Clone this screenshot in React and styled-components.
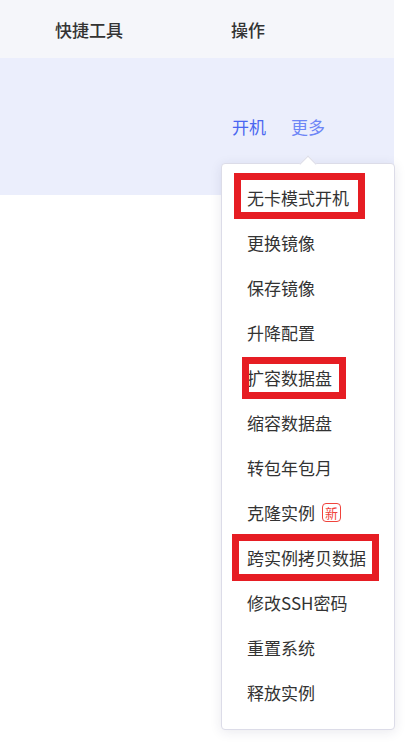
import React from 'react';
import styled, { createGlobalStyle } from 'styled-components';

const GlobalStyle = createGlobalStyle`
  html, body {
    margin: 0;
    padding: 0;
    background: #ffffff;
    font-family: "Noto Sans CJK SC", "Noto Sans", sans-serif;
  }
`;

const Page = styled.div`
  position: relative;
  width: 417px;
  height: 755px;
  overflow: hidden;
`;

const Table = styled.div`
  width: 394px;
`;

const HeadRow = styled.div`
  display: flex;
  align-items: center;
  height: 58px;
  background: #f5f6fa;
  color: #333333;
  font-size: 17px;
  font-weight: 500;
`;

const BodyRow = styled.div`
  display: flex;
  align-items: center;
  height: 137px;
  background: #ebeefc;
  font-size: 17px;
`;

const Cell = styled.div`
  width: ${(p) => p.$w}px;
  flex-shrink: 0;
  display: flex;
  gap: 25px;
`;

const Action = styled.span`
  color: ${(p) => (p.$primary ? '#4a66f0' : '#6d85f6')};
`;

const Menu = styled.div`
  position: absolute;
  left: 221px;
  top: 163px;
  width: 172px;
  padding: 11px 0 14px;
  background: #ffffff;
  border: 1px solid #dcdce8;
  border-radius: 4px;
  box-shadow: 0 2px 12px rgba(40, 40, 90, 0.1);

  &::before {
    content: '';
    position: absolute;
    top: -6px;
    left: 80px;
    width: 11px;
    height: 11px;
    background: #ffffff;
    border-left: 1px solid #dcdce8;
    border-top: 1px solid #dcdce8;
    transform: rotate(45deg);
  }
`;

const Item = styled.div`
  position: relative;
  display: flex;
  align-items: center;
  gap: 7px;
  height: 45px;
  padding-left: 25px;
  font-size: 17px;
  color: #333333;
`;

const Badge = styled.span`
  display: inline-flex;
  align-items: center;
  justify-content: center;
  width: 19px;
  height: 19px;
  box-sizing: border-box;
  border: 1px solid #f0433c;
  border-radius: 4px;
  color: #f0433c;
  font-size: 13px;
  line-height: 1;
`;

const Mark = styled.div`
  position: absolute;
  box-sizing: border-box;
  border: 7px solid #e61d23;
  pointer-events: none;
`;

const items = [
  { label: '无卡模式开机', mark: { left: 12, top: -2, width: 131, height: 46 } },
  { label: '更换镜像' },
  { label: '保存镜像' },
  { label: '升降配置' },
  { label: '扩容数据盘', mark: { left: 20, top: 2, width: 104, height: 42 } },
  { label: '缩容数据盘' },
  { label: '转包年包月' },
  { label: '克隆实例', badge: '新' },
  { label: '跨实例拷贝数据', mark: { left: 10, top: -1, width: 147, height: 47 } },
  { label: '修改SSH密码' },
  { label: '重置系统' },
  { label: '释放实例' },
];

const App = () => {
  return (
    <Page>
      <GlobalStyle />
      <Table>
        <HeadRow>
          <Cell $w={55} />
          <Cell $w={176}>快捷工具</Cell>
          <Cell $w={100}>操作</Cell>
        </HeadRow>
        <BodyRow>
          <Cell $w={232} />
          <Cell $w={120}>
            <Action $primary>开机</Action>
            <Action>更多</Action>
          </Cell>
        </BodyRow>
      </Table>
      <Menu>
        {items.map((item) => (
          <Item key={item.label}>
            {item.label}
            {item.badge && <Badge>{item.badge}</Badge>}
            {/* annotation box drawn over the entry, offsets from the screenshot */}
            {item.mark && <Mark style={item.mark} />}
          </Item>
        ))}
      </Menu>
    </Page>
  );
};

export default App;
